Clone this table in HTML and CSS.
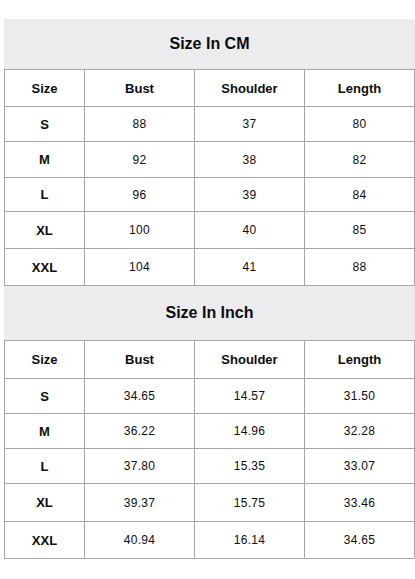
FILE: index.html
```html
<!DOCTYPE html>
<html>
<head>
<meta charset="utf-8">
<link rel="stylesheet" href="styles.css">
</head>
<body>
<div class="page">
  <section class="chart">
    <div class="title title-cm">Size In CM</div>
    <div class="grid grid-cm">
      <div class="cell head">Size</div><div class="cell head">Bust</div><div class="cell head">Shoulder</div><div class="cell head">Length</div>
      <div class="cell size">S</div><div class="cell">88</div><div class="cell">37</div><div class="cell">80</div>
      <div class="cell size">M</div><div class="cell">92</div><div class="cell">38</div><div class="cell">82</div>
      <div class="cell size">L</div><div class="cell">96</div><div class="cell">39</div><div class="cell">84</div>
      <div class="cell size">XL</div><div class="cell">100</div><div class="cell">40</div><div class="cell">85</div>
      <div class="cell size">XXL</div><div class="cell">104</div><div class="cell">41</div><div class="cell">88</div>
    </div>
  </section>
  <section class="chart">
    <div class="title title-inch">Size In Inch</div>
    <div class="grid grid-inch">
      <div class="cell head">Size</div><div class="cell head">Bust</div><div class="cell head">Shoulder</div><div class="cell head">Length</div>
      <div class="cell size">S</div><div class="cell">34.65</div><div class="cell">14.57</div><div class="cell">31.50</div>
      <div class="cell size">M</div><div class="cell">36.22</div><div class="cell">14.96</div><div class="cell">32.28</div>
      <div class="cell size">L</div><div class="cell">37.80</div><div class="cell">15.35</div><div class="cell">33.07</div>
      <div class="cell size">XL</div><div class="cell">39.37</div><div class="cell">15.75</div><div class="cell">33.46</div>
      <div class="cell size">XXL</div><div class="cell">40.94</div><div class="cell">16.14</div><div class="cell">34.65</div>
    </div>
  </section>
</div>
</body>
</html>
```

FILE: styles.css
```css
html, body {
  margin: 0;
  padding: 0;
  background: #ffffff;
}

body {
  font-family: "Liberation Sans", Arial, sans-serif;
  color: #0d0d0d;
}

.page {
  padding: 19px 0 0 4px;
  width: 411px;
}

.title {
  background: #ecebed;
  display: flex;
  align-items: center;
  justify-content: center;
  font-weight: bold;
  font-size: 16px;
}

.title-cm {
  height: 50px;
}

.title-inch {
  height: 54px;
}

.grid {
  display: grid;
  grid-template-columns: 79px 109px 109px 109px;
  gap: 1px;
  padding: 1px;
  background: #a6a6a6;
}

.grid-cm {
  grid-template-rows: 36px 34px 35px 33px 36px 36px;
}

.grid-inch {
  grid-template-rows: 37px 34px 34px 34px 37px 36px;
}

.cell {
  background: #ffffff;
  display: flex;
  align-items: center;
  justify-content: center;
  font-size: 12px;
  letter-spacing: 0.3px;
}

.head,
.size {
  font-weight: bold;
  font-size: 13px;
  letter-spacing: 0;
}
```
